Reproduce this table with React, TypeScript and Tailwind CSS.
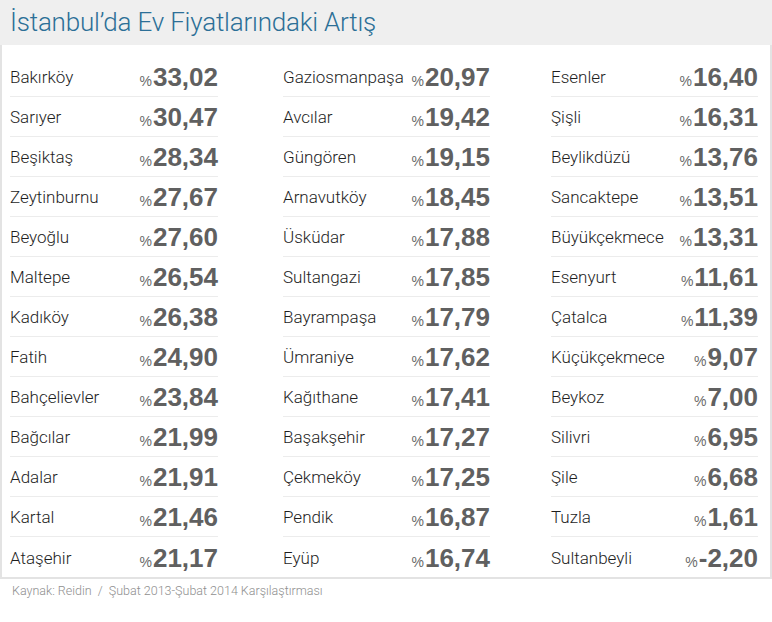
import React from "react";

type Row = [string, string];

const columns: { rows: Row[]; className: string }[] = [
  {
    className: "ml-[8px] w-[208px]",
    rows: [
      ["Bakırköy", "33,02"],
      ["Sarıyer", "30,47"],
      ["Beşiktaş", "28,34"],
      ["Zeytinburnu", "27,67"],
      ["Beyoğlu", "27,60"],
      ["Maltepe", "26,54"],
      ["Kadıköy", "26,38"],
      ["Fatih", "24,90"],
      ["Bahçelievler", "23,84"],
      ["Bağcılar", "21,99"],
      ["Adalar", "21,91"],
      ["Kartal", "21,46"],
      ["Ataşehir", "21,17"],
    ],
  },
  {
    className: "ml-[65px] w-[207px]",
    rows: [
      ["Gaziosmanpaşa", "20,97"],
      ["Avcılar", "19,42"],
      ["Güngören", "19,15"],
      ["Arnavutköy", "18,45"],
      ["Üsküdar", "17,88"],
      ["Sultangazi", "17,85"],
      ["Bayrampaşa", "17,79"],
      ["Ümraniye", "17,62"],
      ["Kağıthane", "17,41"],
      ["Başakşehir", "17,27"],
      ["Çekmeköy", "17,25"],
      ["Pendik", "16,87"],
      ["Eyüp", "16,74"],
    ],
  },
  {
    className: "ml-[61px] w-[207px]",
    rows: [
      ["Esenler", "16,40"],
      ["Şişli", "16,31"],
      ["Beylikdüzü", "13,76"],
      ["Sancaktepe", "13,51"],
      ["Büyükçekmece", "13,31"],
      ["Esenyurt", "11,61"],
      ["Çatalca", "11,39"],
      ["Küçükçekmece", "9,07"],
      ["Beykoz", "7,00"],
      ["Silivri", "6,95"],
      ["Şile", "6,68"],
      ["Tuzla", "1,61"],
      ["Sultanbeyli", "-2,20"],
    ],
  },
];

const App = () => {
  return (
    <div className="w-[772px] h-[622px] bg-white font-['Liberation_Sans',sans-serif]">
      {/* başlık */}
      <div className="h-[45px] bg-[#efefef] flex items-center pl-[10px]">
        <h1 className="text-[26px] font-light text-[#2c6f97] tracking-[-0.2px] font-['Roboto',sans-serif]">
          İstanbul’da Ev Fiyatlarındaki Artış
        </h1>
      </div>

      {/* tablo */}
      <div className="border-x-2 border-b-2 border-[#e3e3e3] pt-[12px] flex">
        {columns.map((col, ci) => (
          <div key={ci} className={col.className}>
            {col.rows.map(([name, value], ri) => (
              <div
                key={name}
                className={
                  "h-[40px] flex items-center justify-between " +
                  (ri < col.rows.length - 1 ? "border-b border-[#ececec]" : "")
                }
              >
                <span className="text-[17px] font-light text-[#1e1e1e] pt-[3px] font-['Roboto',sans-serif]">
                  {name}
                </span>
                <span className="flex items-baseline pt-[3px]">
                  <span className="text-[14px] text-[#6a6a6a] mr-[1px]">%</span>
                  <span className="text-[26px] font-bold text-[#606060] leading-none">
                    {value}
                  </span>
                </span>
              </div>
            ))}
          </div>
        ))}
      </div>

      {/* kaynak */}
      <p className="pl-[12px] pt-[3px] text-[12.5px] font-light text-[#8f8f8f] font-['Roboto',sans-serif]">
        Kaynak: Reidin &nbsp;/ &nbsp;Şubat 2013-Şubat 2014 Karşılaştırması
      </p>
    </div>
  );
};

export default App;
